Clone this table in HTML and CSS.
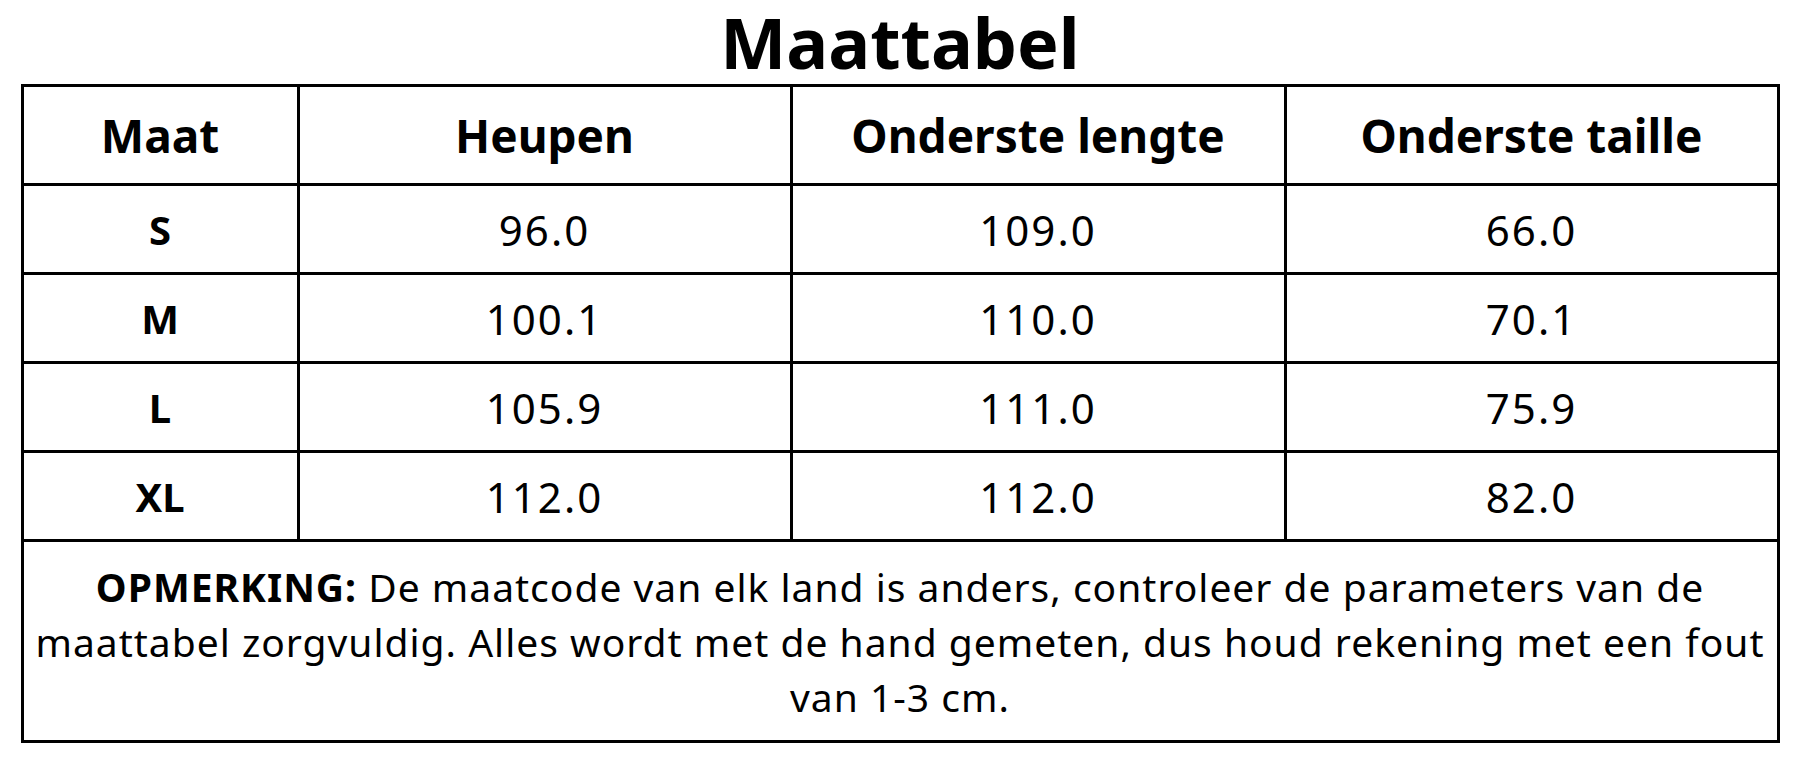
FILE: index.html
```html
<!DOCTYPE html>
<html lang="nl">
<head>
<meta charset="utf-8">
<title>Maattabel</title>
<link rel="stylesheet" href="styles.css">
</head>
<body>
<div class="page">
  <h1 class="title">Maattabel</h1>
  <table class="size-table">
    <colgroup>
      <col class="c1"><col class="c2"><col class="c3"><col class="c4">
    </colgroup>
    <thead>
      <tr class="head-row">
        <th>Maat</th><th>Heupen</th><th>Onderste lengte</th><th>Onderste taille</th>
      </tr>
    </thead>
    <tbody>
      <tr class="data-row"><th>S</th><td>96.0</td><td>109.0</td><td>66.0</td></tr>
      <tr class="data-row"><th>M</th><td>100.1</td><td>110.0</td><td>70.1</td></tr>
      <tr class="data-row"><th>L</th><td>105.9</td><td>111.0</td><td>75.9</td></tr>
      <tr class="data-row"><th>XL</th><td>112.0</td><td>112.0</td><td>82.0</td></tr>
      <tr class="note-row">
        <td colspan="4"><strong>OPMERKING:</strong> De maatcode van elk land is anders, controleer de parameters van de<br>maattabel zorgvuldig. Alles wordt met de hand gemeten, dus houd rekening met een fout<br>van 1-3 cm.</td>
      </tr>
    </tbody>
  </table>
</div>
</body>
</html>
```
FILE: styles.css
```css
html, body {
  margin: 0;
  padding: 0;
  background: #ffffff;
}
body {
  font-family: "Noto Sans", "Open Sans", sans-serif;
  color: #000000;
}
.page {
  width: 1800px;
  height: 766px;
  display: flex;
  flex-direction: column;
  align-items: center;
}
.title {
  margin: 0;
  height: 84px;
  font-size: 70px;
  font-weight: 700;
  line-height: 84px;
}
.size-table {
  width: 1756px;
  border-collapse: collapse;
  table-layout: fixed;
}
.c1 { width: 276px; }
.c2 { width: 493px; }
.c3 { width: 494px; }
.c4 { width: 493px; }
.size-table th,
.size-table td {
  border: 3px solid #000;
  text-align: center;
  vertical-align: middle;
  padding: 0;
}
.head-row th {
  height: 96px;
  font-size: 46px;
  font-weight: 700;
}
.data-row th,
.data-row td {
  height: 86px;
  font-size: 40px;
}
.data-row th { font-weight: 700; }
.data-row td {
  font-weight: 400;
  font-size: 42px;
  letter-spacing: 2px;
}
.note-row td {
  height: 198px;
  font-size: 39px;
  line-height: 55px;
  letter-spacing: 1px;
  white-space: nowrap;
}
.note-row strong { font-weight: 700; }
```
